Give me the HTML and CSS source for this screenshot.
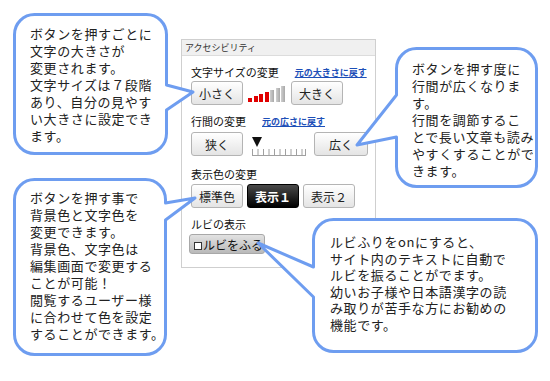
FILE: index.html
```html
<!DOCTYPE html>
<html lang="ja">

<head>
  <meta charset="UTF-8">
  <meta name="viewport" content="width=device-width, initial-scale=1.0">
  <title>アクセシビリティ機能の説明</title>
  <link rel="stylesheet" href="styles.css">
</head>

<body>
  <div class="page">

    <div class="panel">
      <div class="panel-head">アクセシビリティ</div>
      <div class="panel-body">

        <div class="sec-title sec-size">文字サイズの変更<a class="reset" href="#">元の大きさに戻す</a></div>
        <div class="ctrl-row row-size">
          <button class="btn">小さく</button>
          <div class="size-bars">
            <span class="bar on"></span><span class="bar on"></span><span class="bar on"></span><span class="bar on"></span><span class="bar"></span><span class="bar"></span><span class="bar"></span>
          </div>
          <button class="btn">大きく</button>
        </div>

        <div class="sec-title sec-line">行間の変更<a class="reset" href="#">元の広さに戻す</a></div>
        <div class="ctrl-row row-line">
          <button class="btn">狭く</button>
          <svg class="ruler" width="56" height="25" viewBox="0 0 56 25">
            <polygon points="1,5 11,5 6,15" fill="#111" />
            <path d="M1 23.5 H55 M1.5 17 V24 M7 17 V24 M12.5 17 V24 M18 17 V24 M23.5 17 V24 M29 17 V24 M34.5 17 V24 M40 17 V24 M45.5 17 V24 M51 17 V24 M54.5 17 V24" stroke="#a0a0a0" stroke-width="1" fill="none" />
          </svg>
          <button class="btn btn-wide">広く</button>
        </div>

        <div class="sec-title sec-color">表示色の変更</div>
        <div class="ctrl-row row-color">
          <button class="btn">標準色</button>
          <button class="btn btn-dark">表示１</button>
          <button class="btn">表示２</button>
        </div>

        <div class="sec-title sec-ruby">ルビの表示</div>
        <div class="ctrl-row row-ruby">
          <button class="btn-ruby"><span class="check"></span>ルビをふる</button>
        </div>

      </div>
    </div>

    <!-- 吹き出し -->
    <div class="bubble bubble-size">
      <svg class="bubble-shape" width="155" height="142">
        <path d="M21.5 1.5 H133.5 A20 20 0 0 1 153.5 21.5 V72 L180 79 L153.5 97 V120.5 A20 20 0 0 1 133.5 140.5 H21.5 A20 20 0 0 1 1.5 120.5 V21.5 A20 20 0 0 1 21.5 1.5 Z" />
      </svg>
      <p class="bubble-text">ボタンを押すごとに<br>文字の大きさが<br>変更されます。<br>文字サイズは７段階<br>あり、自分の見やす<br>い大きさに設定でき<br>ます。</p>
    </div>

    <div class="bubble bubble-line">
      <svg class="bubble-shape" width="143" height="141">
        <path d="M21.5 1.5 H121.5 A20 20 0 0 1 141.5 21.5 V119.5 A20 20 0 0 1 121.5 139.5 H21.5 A20 20 0 0 1 1.5 119.5 V90 L-38 98 L1.5 48 V21.5 A20 20 0 0 1 21.5 1.5 Z" />
      </svg>
      <p class="bubble-text">ボタンを押す度に<br>行間が広くなりま<br>す。<br>行間を調節するこ<br>とで長い文章も読み<br>やすくすることがで<br>きます。</p>
    </div>

    <div class="bubble bubble-color">
      <svg class="bubble-shape" width="155" height="178">
        <path d="M21.5 1.5 H132.5 A20 20 0 0 1 152.5 21.5 V25 L182 20 L152.5 42 V156.5 A20 20 0 0 1 132.5 176.5 H21.5 A20 20 0 0 1 1.5 156.5 V21.5 A20 20 0 0 1 21.5 1.5 Z" />
      </svg>
      <p class="bubble-text">ボタンを押す事で<br>背景色と文字色を<br>変更できます。<br>背景色、文字色は<br>編集画面で変更する<br>ことが可能！<br>閲覧するユーザー様<br>に合わせて色を設定<br>することができます。</p>
    </div>

    <div class="bubble bubble-ruby">
      <svg class="bubble-shape" width="227" height="136">
        <path d="M21.5 1.5 H204.5 A20 20 0 0 1 224.5 21.5 V113.5 A20 20 0 0 1 204.5 133.5 H21.5 A20 20 0 0 1 1.5 113.5 V79 L-54 25 L1.5 49 V21.5 A20 20 0 0 1 21.5 1.5 Z" />
      </svg>
      <p class="bubble-text">ルビふりをonにすると、<br>サイト内のテキストに自動で<br>ルビを振ることがでます。<br>幼いお子様や日本語漢字の読<br>み取りが苦手な方にお勧めの<br>機能です。</p>
    </div>

  </div>
</body>

</html>
```

FILE: styles.css
```css
body {
  margin: 0;
  background-color: #fff;
  font-family: "Noto Sans CJK JP", "Noto Sans", sans-serif;
  color: #222;
}

.page {
  position: relative;
  width: 550px;
  height: 381px;
  overflow: hidden;
}

/* パネル */
.panel {
  box-sizing: border-box;
  margin: 39px 0 0 181px;
  width: 195px;
  height: 229px;
  border: 1px solid #cfcfcf;
  background-color: #fff;
}

.panel-head {
  height: 15px;
  line-height: 15px;
  padding-left: 3px;
  font-size: 9px;
  color: #333;
  background-color: #f0f0f0;
  border-bottom: 1px solid #dcdcdc;
}

.panel-body {
  padding-left: 9px;
}

.sec-title {
  display: flex;
  align-items: center;
  height: 16px;
  font-size: 11px;
  color: #111;
}

.reset {
  margin-left: 16px;
  font-size: 9px;
  font-weight: bold;
  color: #1d4fb8;
  text-decoration: underline;
}

.sec-size { margin-top: 8px; }
.sec-line { margin-top: 8px; }
.sec-color { margin-top: 9px; }
.sec-ruby { margin-top: 8px; }

.ctrl-row {
  display: flex;
  align-items: flex-start;
}

.row-size { margin-top: 1px; }
.row-line { margin-top: 3px; }
.row-color { margin-top: 2px; gap: 4px; }
.row-ruby { margin-top: 2px; margin-left: -2px; }

.btn {
  box-sizing: border-box;
  width: 52px;
  height: 24px;
  padding: 0;
  font-family: inherit;
  font-size: 12px;
  color: #222;
  background: linear-gradient(#ffffff, #e4e4e4);
  border: 1px solid #b4b4b4;
  border-radius: 3px;
}

.btn-wide {
  width: 54px;
  margin-left: 7px;
}

.btn-dark {
  color: #fff;
  font-weight: bold;
  background: linear-gradient(#4a4a4a, #000);
  border-color: #000;
}

/* 文字サイズのメーター */
.size-bars {
  display: flex;
  align-items: flex-end;
  gap: 1.5px;
  height: 21px;
  margin: 0 6px 0 5px;
}

.bar {
  width: 4px;
  background: linear-gradient(90deg, #d0d0d0, #a8a8a8);
}

.bar.on {
  background: #e00000;
}

.bar:nth-child(1) { height: 4px; }
.bar:nth-child(2) { height: 6px; }
.bar:nth-child(3) { height: 8px; }
.bar:nth-child(4) { height: 10px; }
.bar:nth-child(5) { height: 12px; }
.bar:nth-child(6) { height: 14px; }
.bar:nth-child(7) { height: 16px; }

.ruler {
  display: block;
  margin-left: 8px;
}

.btn-ruby {
  display: flex;
  align-items: center;
  box-sizing: border-box;
  width: 76px;
  height: 20px;
  padding: 0 0 0 4px;
  font-family: inherit;
  font-size: 12px;
  color: #111;
  background: linear-gradient(#e2e2e2, #b9b9b9);
  border: 1px solid #a8a8a8;
  border-radius: 3px;
}

.check {
  width: 6px;
  height: 6px;
  margin-right: 1px;
  margin-top: 3px;
  border: 1px solid #333;
  background-color: #fff;
}

/* 吹き出し */
.bubble {
  position: absolute;
}

.bubble-shape {
  position: absolute;
  left: 0;
  top: 0;
  overflow: visible;
}

.bubble-shape path {
  fill: #fff;
  stroke: #6e9df0;
  stroke-width: 3;
  stroke-linejoin: round;
}

.bubble-text {
  position: relative;
  margin: 0;
  font-size: 13px;
  line-height: 17px;
  letter-spacing: 0.6px;
  white-space: nowrap;
  color: #222;
}

.bubble-size {
  left: 13px;
  top: 13px;
  width: 155px;
  height: 142px;
}

.bubble-size .bubble-text {
  padding: 12px 0 0 17px;
}

.bubble-line {
  left: 395px;
  top: 47px;
  width: 143px;
  height: 141px;
}

.bubble-line .bubble-text {
  padding: 13px 0 0 17px;
}

.bubble-color {
  left: 13px;
  top: 178px;
  width: 155px;
  height: 178px;
}

.bubble-color .bubble-text {
  padding: 11px 0 0 17px;
}

.bubble-ruby {
  left: 312px;
  top: 218px;
  width: 227px;
  height: 136px;
}

.bubble-ruby .bubble-text {
  padding: 16px 0 0 18px;
  line-height: 16.6px;
}
```
